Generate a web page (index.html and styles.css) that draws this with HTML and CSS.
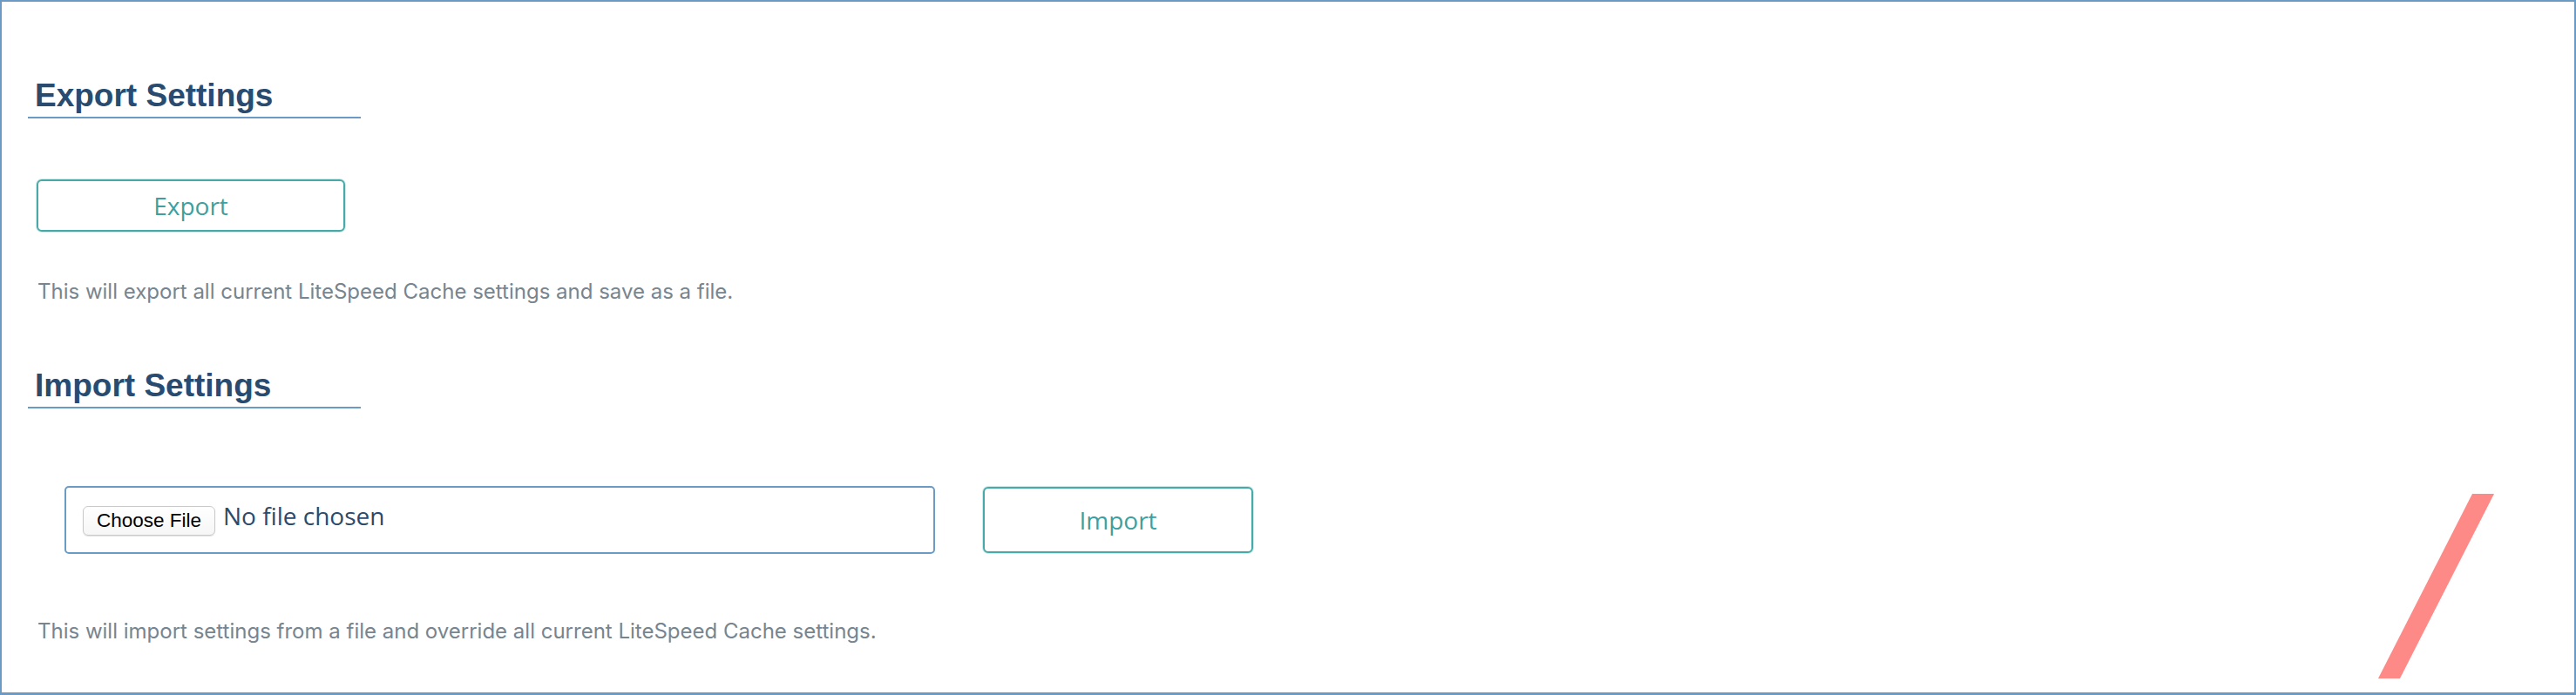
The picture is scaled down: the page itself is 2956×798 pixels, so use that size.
FILE: index.html
```html
<!DOCTYPE html>
<html lang="en">
<head>
<meta charset="utf-8">
<title>Import / Export Settings</title>
<link rel="stylesheet" href="styles.css">
</head>
<body>
<div class="frame">
  <section class="section">
    <h2 class="section-title">Export Settings</h2>
    <button class="btn btn-export" type="button">Export</button>
    <p class="desc desc-export">This will export all current LiteSpeed Cache settings and save as a file.</p>
  </section>
  <section class="section">
    <h2 class="section-title section-title-import">Import Settings</h2>
    <div class="import-row">
      <label class="file-box">
        <span class="file-btn">Choose File</span>
        <span class="file-name">No file chosen</span>
      </label>
      <button class="btn btn-import" type="button">Import</button>
    </div>
    <p class="desc desc-import">This will import settings from a file and override all current LiteSpeed Cache settings.</p>
  </section>
  <svg class="slash" width="133" height="212" viewBox="0 0 133 212" aria-hidden="true">
    <polygon points="108,0 133,0 25,212 0,212" fill="#fe8a88"/>
  </svg>
</div>
</body>
</html>
```

FILE: styles.css
```css
html, body {
  margin: 0;
  padding: 0;
  background: #ffffff;
}

.frame {
  position: relative;
  box-sizing: border-box;
  width: 2956px;
  height: 798px;
  border: 2px solid #6b9bc4;
  border-bottom-width: 3px;
  padding: 86px 0 0 30px;
  background: #ffffff;
  overflow: hidden;
}

.section {
  display: flex;
  flex-direction: column;
  align-items: flex-start;
}

.section-title {
  box-sizing: border-box;
  width: 382px;
  margin: 0;
  padding: 0 0 2px 8px;
  font-family: "Liberation Sans", Arial, sans-serif;
  font-weight: 700;
  font-size: 37px;
  line-height: 44px;
  color: #284b6f;
  border-bottom: 2px solid #6b9bc4;
}

.section-title-import {
  margin-top: 70px;
}

.btn {
  box-sizing: border-box;
  background: #ffffff;
  border: 2px solid #47a9a8;
  border-radius: 6px;
  box-shadow: 0 0 0 1px rgba(71, 169, 168, 0.25);
  color: #3e9f9e;
  font-family: "Open Sans", sans-serif;
  font-size: 28px;
  font-weight: 400;
  padding: 0;
  cursor: pointer;
}

.btn-export {
  width: 354px;
  height: 60px;
  margin: 70px 0 0 10px;
  line-height: 54px;
}

.desc {
  margin: 0;
  padding-left: 11px;
  font-family: Inter, "Liberation Sans", sans-serif;
  font-size: 24px;
  line-height: 32px;
  color: #76858f;
}

.desc-export {
  margin-top: 53px;
}

.import-row {
  display: flex;
  align-items: center;
  gap: 55px;
  margin: 89px 0 0 42px;
}

.file-box {
  box-sizing: border-box;
  width: 999px;
  height: 78px;
  border: 2px solid #6b9bc4;
  border-radius: 5px;
  padding: 0 19px;
  display: flex;
  align-items: center;
  gap: 9px;
  cursor: pointer;
}

.file-btn {
  box-sizing: border-box;
  width: 152px;
  height: 34px;
  display: flex;
  align-items: center;
  justify-content: center;
  border: 1px solid #c9c9c9;
  border-radius: 6px;
  background: linear-gradient(#ffffff, #f6f6f6);
  box-shadow: 0 1px 1px rgba(0, 0, 0, 0.12);
  font-family: "Liberation Sans", Arial, sans-serif;
  font-size: 22.5px;
  color: #000000;
  margin-top: 2px;
}

.file-name {
  font-family: "Open Sans", sans-serif;
  font-size: 28px;
  line-height: 38px;
  color: #2c4a6b;
  margin-bottom: 10px;
}

.btn-import {
  width: 310px;
  height: 76px;
  line-height: 70px;
}

.desc-import {
  margin-top: 73px;
}

.slash {
  position: absolute;
  left: 2727px;
  top: 565px;
  display: block;
}
```
